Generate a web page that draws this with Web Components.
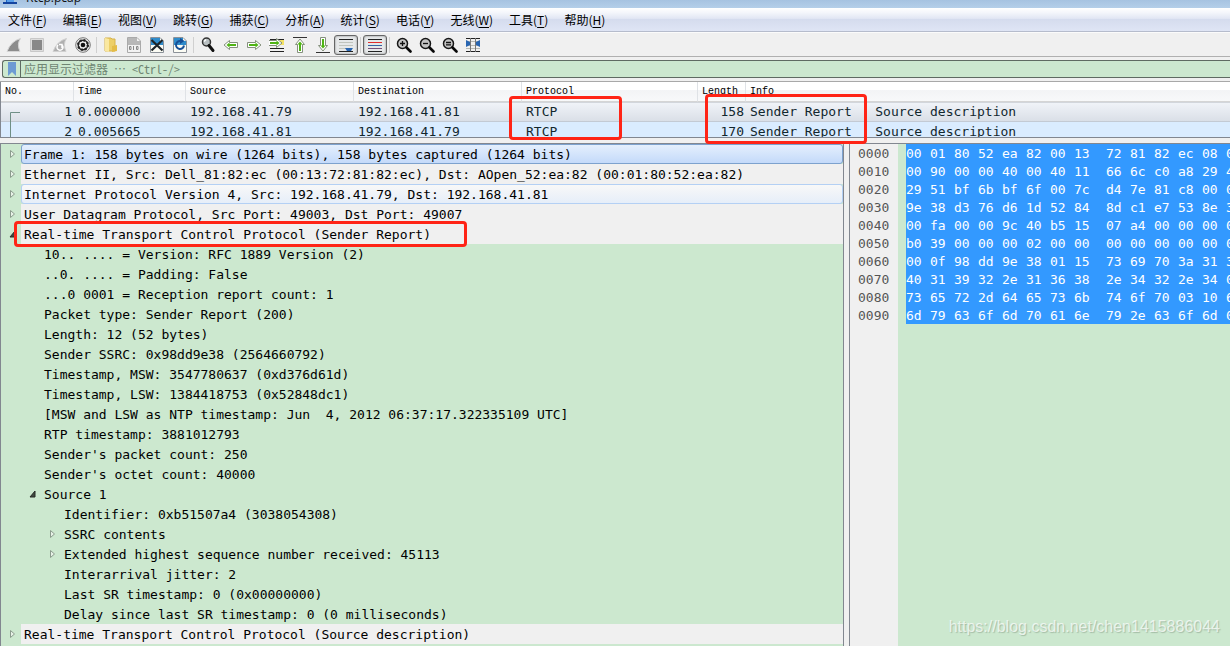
<!DOCTYPE html>
<html lang="zh-CN">
<head>
<meta charset="utf-8">
<title>Rtcp.pcap</title>
<style>
html, body { margin: 0; height: 100%; overflow: hidden; background: #f0f0f0; }
</style>
</head>
<body>
<analyzer-app></analyzer-app>
<script>
const MONO = '"DejaVu Sans Mono", "Liberation Mono", monospace';
const CJK = '"Noto Sans CJK SC", sans-serif';
const define = (name, render) => customElements.define(name, class extends HTMLElement {
  connectedCallback() {
    if (!this.shadowRoot) this.attachShadow({ mode: 'open' }).innerHTML = render(this);
  }
});

define('title-bar', () => `
<style>
:host { display: block; height: 8px; overflow: hidden; background: linear-gradient(#a6c3e1, #b4cfe9); }
.line { display: flex; gap: 9px; padding-left: 3px; margin-top: -10px; align-items: flex-start; }
svg { flex: none; }
span { font: 12px/16px "Open Sans", sans-serif; color: #111; }
</style>
<div class="line"><svg width="14" height="16" viewBox="0 0 14 16"><path d="M3 13V0h8v13z" fill="#1e66c4"/><path d="M0 12h14v2H0z" fill="#1545a0"/><path d="M4 10q4-5 7-6v8H4z" fill="#5aa0ea"/></svg><span>Rtcp.pcap</span></div>`);

define('menu-bar', () => {
  const items = [['文件','F'],['编辑','E'],['视图','V'],['跳转','G'],['捕获','C'],['分析','A'],['统计','S'],['电话','Y'],['无线','W'],['工具','T'],['帮助','H']];
  return `
<style>
:host { display: block; border-bottom: 1px solid #b6bccc; background: linear-gradient(#fff 0, #f4f6fb 20%, #e2e7f4 45%, #d5dcee 50%, #dfe5f5 100%); }
nav { display: flex; height: 23px; }
button { border: 0; background: none; padding: 0 8px; font: 12px/23px ${CJK}; color: #000; white-space: nowrap; }
u { text-underline-offset: 2px; }
</style>
<nav>${items.map(([t, k]) => `<button>${t}(<u>${k}</u>)</button>`).join('')}</nav>`;
});

const doc = '<path d="M1.500.5h9.500l3.500 3.500v11.500h-13z" fill="#fcfcf4" stroke="#8b9198"/><path d="M2 1h9v3h3v4H2z" fill="#2f8ccc"/>';
const glass = s => `<circle cx="6.500" cy="6.500" r="5" fill="#c4c4c4" stroke="#161616" stroke-width="1.500"/><path d="M10.500 10.500l4 4" stroke="#080808" stroke-width="2.600" stroke-linecap="round"/><path d="${s}" stroke="#111" stroke-width="1.300"/>`;
const arrow = t => `<path transform="${t}" d="M1 8l5.500-4.500v2h8v5h-8v2z" fill="#fff" stroke="#84907c"/><path transform="${t}" d="M3.500 8l3-2.600v1.600h6.500v2H6.500v1.600z" fill="#4fb414"/>`;
const ICONS = {
  start: '<path d="M1 14.500Q5 4 14.500 1.500Q10.500 7 14 14.500z" fill="#8c8c8c" stroke="#d4d4d4"/>',
  stop: '<path d="M1.500 1.500h13v13h-13z" fill="#ddd" stroke="#c8c8c8"/><path d="M3 3h10v10H3z" fill="#888"/>',
  restart: '<path d="M1 14.500Q5 4 14.500 1.500Q10.500 7 14 14.500z" fill="#b0b0b0" stroke="#d0d0d0"/><path d="M6 8a3 3 0 1 0 4 0M10 11V7.500H7" fill="none" stroke="#fff" stroke-width="1.500"/>',
  options: '<circle cx="8" cy="8" r="7.300" fill="#eee" stroke="#777"/><circle cx="8" cy="8" r="4.800" fill="none" stroke="#222" stroke-width="1.400"/><circle cx="8" cy="8" r="4.800" fill="none" stroke="#222" stroke-width="2.400" stroke-dasharray="1.800 1.970"/><circle cx="8" cy="8" r="2.300" fill="#111"/>',
  open: '<path d="M2 1h6l1 1h3v12H2z" fill="#edcf68" stroke="#d6b24b"/><path d="M2 1l4 1v13l-4-1z" fill="#fae8a0"/><path d="M9 9l5-1v6l-5 1z" fill="#e4bc48"/>',
  save: '<path d="M1.500.5h9.500l3.500 3.500v11.500h-13z" fill="#f2f2f2" stroke="#aaa"/><path d="M2 1h9v3h3v4H2z" fill="#b8b8b8"/><path d="M3.500 9.500h1.500v3H3.500zM7.500 9v4M10.500 9.500h1.500v3h-1.500z" fill="none" stroke="#888"/>',
  close: doc + '<path d="M2.500 3l11 10.500M13.500 3l-11 10.500" stroke="#1d2429" stroke-width="2.200"/>',
  reload: doc + '<path d="M8.500 4a4 4 0 1 0 3.500 4.500" fill="none" stroke="#174f96" stroke-width="2"/><path d="M8 1l4.500 3L8 7z" fill="#174f96"/>',
  find: '<circle cx="6.500" cy="5" r="4" fill="#b9c0c2" stroke="#333" stroke-width="1.500"/><path d="M4 4.500l2-2" stroke="#fff" stroke-width="1.500"/><path d="M9 8.500l4 5" stroke="#111" stroke-width="3" stroke-linecap="round"/>',
  back: arrow(''), fwd: arrow('rotate(180 8 8)'),
  goto: '<path d="M1 2.500h14M11 5.500h4M1 11.500h14M1 14.500h14" stroke="#222"/><path d="M11 3h4v5h-4z" fill="#f4e264"/><g transform="translate(0 -2)">' + arrow('rotate(180 7 8)') + '</g>',
  top: '<path d="M1 .5h14" stroke="#333"/><g transform="translate(0 1)">' + arrow('rotate(90 8 8)') + '</g>',
  bottom: '<path d="M1 15.500h14" stroke="#333"/><g transform="translate(0 -1)">' + arrow('rotate(-90 8 8)') + '</g>',
  scroll: '<path d="M1 2.500h14M1 14.500h14" stroke="#222"/><path d="M1 5.500h14M1 8.500h14M1 11.500h7" stroke="#c0c4bd"/><path d="M7 11h8l-2 3H9z" fill="#2865b1"/>',
  color: '<path d="M1 2.500h14M1 14.500h14" stroke="#222"/><path d="M1 5.500h14" stroke="#e22d2d"/><path d="M1 8.500h14" stroke="#3465a4"/><path d="M1 11.500h14" stroke="#75507b"/>',
  zin: glass('M4 6.500h5M6.500 4v5'), zout: glass('M4 6.500h5'), zone: glass('M4 5.500h5M4 7.800h5'),
  resize: '<path d="M1 1.500h14M1 14.500h14" stroke="#222"/><path d="M1 4.500h14M1 8.500h14M1 11.500h14" stroke="#b5b8b2"/><path d="M5.500 1v14M10.500 1v14" stroke="#777"/><path d="M1 3l4 2v3l-4 2zM15 3l-4 2v3l4 2z" fill="#2865b1"/>'
};
define('tool-button', el => `
<style>
:host { display: block; flex: none; width: 23px; }
:host([checked]) { width: 24px; }
button { box-sizing: border-box; width: 100%; height: 20px; padding: 0; border: 1px solid transparent; background: none; display: grid; place-items: center; border-radius: 3px; }
:host([checked]) button { border-color: #666; box-shadow: inset 0 0 2px #777; background: #e6e8e9; }
svg { display: block; }
</style>
<button aria-label="${el.getAttribute('icon')}"><svg width="16" height="16" viewBox="0 0 16 16">${ICONS[el.getAttribute('icon')]}</svg></button>`);

define('tool-bar', () => {
  const list = 'start stop restart options | open save close reload | find back fwd goto top bottom *scroll | *color | zin zout zone resize';
  return `
<style>
:host { display: flex; align-items: center; height: 23px; padding-left: 2px; border-bottom: 1px solid #b0b0b0; border-top: 1px solid #fbfbfb; background: #f0f0f0; }
i { flex: none; width: 1px; height: 16px; margin: 0 2px; background: #d0d0d0; }
</style>
${list.split(' ').map(n => n === '|' ? '<i></i>' : `<tool-button icon="${n.replace('*', '')}"${n[0] === '*' ? ' checked' : ''}></tool-button>`).join('')}`;
});

define('filter-bar', () => `
<style>
:host { display: block; padding: 3px 0 3px 2px; border-bottom: 1px solid #a8a8a8; }
form { display: flex; height: 16px; border: 1px solid #5f6b62; border-right: 0; border-radius: 3px 0 0 3px; background: #cce8cf; }
button { width: 18px; padding: 0; border: 0; border-right: 1px solid #5f6b62; background: none; display: grid; place-items: center; }
input { flex: 1; min-width: 0; border: 0; padding: 0 3px; background: none; outline: 0; font: 12px/16px ${CJK}; font-feature-settings: "hwid"; }
input::placeholder { color: #6f8573; opacity: 1; }
</style>
<form><button type="button" aria-label="bookmark"><svg width="8" height="14" viewBox="0 0 8 14"><path d="M0 0h8v14l-4-4-4 4z" fill="#6d9bd3"/></svg></button><input aria-label="应用显示过滤器" placeholder="应用显示过滤器 … &lt;Ctrl-/&gt;"></form>`);

define('packet-list', () => `
<style>
:host { display: block; height: 55px; overflow: hidden; border-left: 1px solid #828790; border-bottom: 1px solid #828790; background: #fff; position: relative; }
table { width: 100%; table-layout: fixed; border-collapse: separate; border-spacing: 0; font: 13px/18px ${MONO}; color: #12272e; }
th { box-sizing: border-box; height: 20px; padding: 1px 4px 0; text-align: left; font: 10px/18px "Liberation Mono", monospace; color: #000; background: linear-gradient(#fff 40%, #f3f4f6 45%, #f8f9fa); border-right: 1px solid #dfe2e6; border-bottom: 1px solid #d5d5d5; }
th:last-child { border-right: 0; }
td { box-sizing: border-box; height: 20px; padding: 0 0 0 4px; white-space: pre; overflow: hidden; }
td.n { text-align: right; padding-right: 2px; }
tr.sel td { background: linear-gradient(#f0f3f8, #dadfe7); border-top: 1px solid #d2d6dc; border-bottom: 1px solid #c3cad4; }
tr.rel td { background: #daecff; }
svg { position: absolute; left: 9px; top: 30px; }
</style>
<table>
<colgroup><col style="width:73px"><col style="width:112px"><col style="width:168px"><col style="width:168px"><col style="width:176px"><col style="width:48px"><col></colgroup>
<thead><tr><th>No.</th><th>Time</th><th>Source</th><th>Destination</th><th>Protocol</th><th>Length</th><th>Info</th></tr></thead>
<tbody>
<tr class="sel"><td class="n">1</td><td>0.000000</td><td>192.168.41.79</td><td>192.168.41.81</td><td>RTCP</td><td class="n">158</td><td>Sender Report   Source description</td></tr>
<tr class="rel"><td class="n">2</td><td>0.005665</td><td>192.168.41.81</td><td>192.168.41.79</td><td>RTCP</td><td class="n">170</td><td>Sender Report   Source description</td></tr>
</tbody></table>
<svg width="10" height="26"><path d="M10 .5H.5V26" fill="none" stroke="#6f8f86"/></svg>`);

define('tree-row', el => {
  const a = el.getAttribute('arrow');
  return `
<style>
:host { display: flex; height: 20px; font: 13px/22px ${MONO}; color: #000; }
.arrow { flex: none; box-sizing: border-box; width: 20px; padding: 5px 0 0 8px; }
.arrow svg { display: block; }
.text { flex: 1; min-width: 0; box-sizing: border-box; padding-left: 3px; white-space: pre; overflow: hidden; }
:host([level="1"]) { padding-left: 20px; }
:host([level="2"]) { padding-left: 40px; }
:host([level="0"]) .text { background: #f0f0f0; }
:host([state]) .text { border: 1px solid #b4d0f4; padding-left: 2px; border-radius: 3px; line-height: 20px; background: linear-gradient(#f8f8f8, #e6eef9); }
:host([state="selected"]) .text { border-color: #7da2ce; background: linear-gradient(#e4effd, #c4dafa); }
</style>
<div class="arrow">${a === 'closed' ? '<svg width="8" height="10"><path d="M1.500 1.500v7l4-3.500z" fill="#e8f2e8" stroke="#8b9b8d"/></svg>' : a === 'open' ? '<svg width="8" height="10"><path d="M1 8h5V2z" fill="#404840" stroke="#262b26"/></svg>' : ''}</div><div class="text"><slot></slot></div>`;
});

define('detail-tree', () => {
  const rows = [
    [0,'closed','Frame 1: 158 bytes on wire (1264 bits), 158 bytes captured (1264 bits)','selected'],
    [0,'closed','Ethernet II, Src: Dell_81:82:ec (00:13:72:81:82:ec), Dst: AOpen_52:ea:82 (00:01:80:52:ea:82)'],
    [0,'closed','Internet Protocol Version 4, Src: 192.168.41.79, Dst: 192.168.41.81','hover'],
    [0,'closed','User Datagram Protocol, Src Port: 49003, Dst Port: 49007'],
    [0,'open','Real-time Transport Control Protocol (Sender Report)'],
    [1,'','10.. .... = Version: RFC 1889 Version (2)'],
    [1,'','..0. .... = Padding: False'],
    [1,'','...0 0001 = Reception report count: 1'],
    [1,'','Packet type: Sender Report (200)'],
    [1,'','Length: 12 (52 bytes)'],
    [1,'','Sender SSRC: 0x98dd9e38 (2564660792)'],
    [1,'','Timestamp, MSW: 3547780637 (0xd376d61d)'],
    [1,'','Timestamp, LSW: 1384418753 (0x52848dc1)'],
    [1,'','[MSW and LSW as NTP timestamp: Jun  4, 2012 06:37:17.322335109 UTC]'],
    [1,'','RTP timestamp: 3881012793'],
    [1,'',"Sender's packet count: 250"],
    [1,'',"Sender's octet count: 40000"],
    [1,'open','Source 1'],
    [2,'','Identifier: 0xb51507a4 (3038054308)'],
    [2,'closed','SSRC contents'],
    [2,'closed','Extended highest sequence number received: 45113'],
    [2,'','Interarrival jitter: 2'],
    [2,'','Last SR timestamp: 0 (0x00000000)'],
    [2,'','Delay since last SR timestamp: 0 (0 milliseconds)'],
    [0,'closed','Real-time Transport Control Protocol (Source description)']
  ];
  return `
<style>:host { display: block; min-width: 0; overflow: hidden; background: #cce8cf; border: 1px solid #828790; border-bottom: 0; }</style>
${rows.map(([l, a, t, s]) => `<tree-row level="${l}" arrow="${a}"${s ? ` state="${s}"` : ''}>${t}</tree-row>`).join('')}`;
});

define('hex-view', () => {
  const rows = [
    '00 01 80 52 ea 82 00 13 72 81 82 ec 08 00', '00 90 00 00 40 00 40 11 66 6c c0 a8 29 4f',
    '29 51 bf 6b bf 6f 00 7c d4 7e 81 c8 00 0c', '9e 38 d3 76 d6 1d 52 84 8d c1 e7 53 8e 39',
    '00 fa 00 00 9c 40 b5 15 07 a4 00 00 00 00', 'b0 39 00 00 00 02 00 00 00 00 00 00 00 00',
    '00 0f 98 dd 9e 38 01 15 73 69 70 3a 31 30', '40 31 39 32 2e 31 36 38 2e 34 32 2e 34 00',
    '73 65 72 2d 64 65 73 6b 74 6f 70 03 10 61', '6d 79 63 6f 6d 70 61 6e 79 2e 63 6f 6d 00'];
  return `
<style>
:host { display: block; min-width: 0; overflow: hidden; border: 1px solid #828790; border-width: 1px 0 0 1px; background: linear-gradient(90deg, #f0f0f0 48px, #cce8cf 48px); }
table { table-layout: fixed; width: 400px; border-collapse: collapse; font: 13px/16px ${MONO}; }
th, td { padding: 2px 0 0; height: 16px; text-align: left; font-weight: 400; white-space: pre; }
th { color: #555; padding-left: 8px; }
td { color: #fff; background: #3399ff; }
td:nth-of-type(9) { padding-left: 8px; }
</style>
<table><colgroup><col style="width:56px"><col span="8" style="width:24px"><col style="width:32px"><col span="5" style="width:24px"></colgroup>
<tbody>${rows.map((r, i) => `<tr><th scope="row">00${i}0</th>${r.split(' ').map(b => `<td>${b}</td>`).join('')}</tr>`).join('')}</tbody></table>`;
});

define('red-mark', () => `<style>:host { position: absolute; box-sizing: border-box; border: 3px solid #ff2416; border-radius: 4px; pointer-events: none; }</style>`);

define('analyzer-app', () => `
<style>
:host { display: flex; flex-direction: column; height: 100vh; overflow: hidden; position: relative; background: #f0f0f0; }
main { flex: 1; min-height: 0; display: grid; grid-template-columns: minmax(0, 844fr) minmax(0, 381fr); column-gap: 5px; padding-top: 5px; }
.protocol { left: 509px; top: 96px; width: 113px; height: 44px; }
.info { left: 705px; top: 94px; width: 162px; height: 50px; }
.layer { left: 14px; top: 221px; width: 453px; height: 26px; }
.mark { position: absolute; right: 10px; bottom: 9px; font: 16px/20px "Liberation Sans", sans-serif; color: rgba(255,255,255,.7); text-shadow: 1px 1px 1px rgba(90,110,90,.35); }
</style>
<title-bar></title-bar><menu-bar></menu-bar><tool-bar></tool-bar><filter-bar></filter-bar>
<packet-list></packet-list>
<main><detail-tree></detail-tree><hex-view></hex-view></main>
<red-mark class="protocol"></red-mark><red-mark class="info"></red-mark><red-mark class="layer"></red-mark>
<div class="mark">https://blog.csdn.net/chen1415886044</div>`);
</script>
</body>
</html>
